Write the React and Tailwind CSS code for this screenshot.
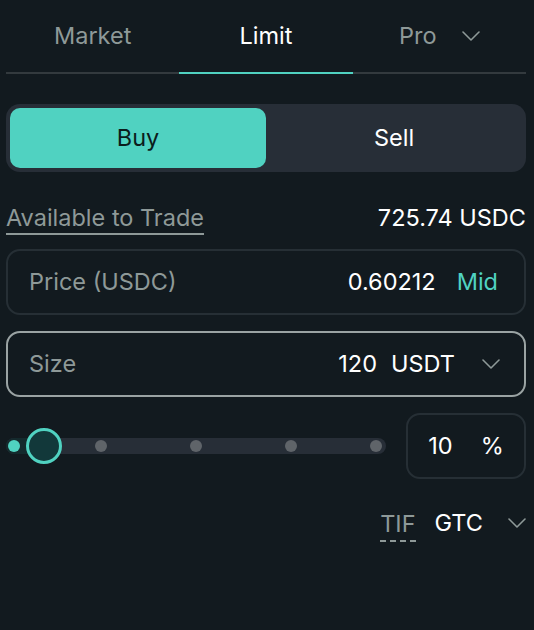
import React from "react";

function Chevron({ className = "" }) {
  return (
    <svg width="18" height="10" viewBox="0 0 18 10" className={className} fill="none">
      <polyline points="1,1 9,9 17,1" stroke="#8e9998" strokeWidth="1.6" strokeLinecap="round" strokeLinejoin="round" />
    </svg>
  );
}

export default function App() {
  const marks = [101, 196, 290.5, 376];
  return (
    <div className="w-[534px] h-[630px] bg-[#121a1f] pl-[6px] pr-[8px] font-['Inter',sans-serif] text-[23.5px] overflow-hidden">
      {/* Tabs */}
      <div className="flex h-[74px]">
        <div className="flex-1 flex items-center justify-center border-b-2 border-[#333a3e] text-[#8e9998]">Market</div>
        <div className="flex-1 flex items-center justify-center border-b-2 border-[#50d2c1] text-white">Limit</div>
        <div className="flex-1 flex items-center justify-center gap-[25px] border-b-2 border-[#333a3e] text-[#8e9998]">
          <span>Pro</span>
          <Chevron />
        </div>
      </div>

      {/* Buy / Sell */}
      <div className="mt-[30px] h-[68px] rounded-[14px] bg-[#272e37] p-[4px] flex">
        <div className="flex-1 rounded-[10px] bg-[#50d2c1] text-[#0b1d1c] flex items-center justify-center">Buy</div>
        <div className="flex-1 text-white flex items-center justify-center">Sell</div>
      </div>

      {/* Available */}
      <div className="mt-[32px] h-[28px] flex items-center justify-between leading-[28px]">
        <span className="text-[#8e9998] underline decoration-2 underline-offset-[7px] decoration-[#8e9998]">Available to Trade</span>
        <span className="text-white">725.74 USDC</span>
      </div>

      {/* Price */}
      <div className="mt-[17px] h-[66px] rounded-[14px] border-2 border-[#262f35] flex items-center pl-[21px] pr-[26px]">
        <span className="text-[#8e9998]">Price (USDC)</span>
        <span className="ml-auto text-white">0.60212</span>
        <span className="ml-[21px] text-[#50d2c1]">Mid</span>
      </div>

      {/* Size */}
      <div className="mt-[16px] h-[66px] rounded-[14px] border-2 border-[#9aa3a3] flex items-center pl-[21px] pr-[24px]">
        <span className="text-[#8e9998]">Size</span>
        <span className="ml-auto text-white">120</span>
        <span className="ml-[14px] text-white">USDT</span>
        <Chevron className="ml-[27px]" />
      </div>

      {/* Slider */}
      <div className="mt-[16px] h-[66px] flex items-center gap-[20px]">
        <div className="relative flex-1 h-[16px] rounded-full bg-[#272e37]">
          <div className="absolute left-0 top-0 h-[16px] w-[44px] rounded-full bg-[#142a2d]" />
          <div className="absolute top-[2px] left-[2px] w-[12px] h-[12px] rounded-full bg-[#50d2c1]" />
          {marks.map((m) => (
            <div
              key={m}
              className="absolute top-[2px] w-[12px] h-[12px] rounded-full bg-[#5f6469]"
              style={{ left: m - 6 - 6 }}
            />
          ))}
          <div className="absolute top-[-10px] left-[20px] w-[36px] h-[36px] rounded-full border-[3px] border-[#50d2c1] bg-[#12383a]" />
        </div>
        <div className="w-[120px] h-[66px] rounded-[14px] border-2 border-[#262f35] flex items-center justify-center gap-[28px] text-white">
          <span>10</span>
          <span>%</span>
        </div>
      </div>

      {/* TIF */}
      <div className="mt-[30px] h-[28px] flex items-center justify-end">
        <span className="text-[#8e9998] inline-block leading-[28px] pb-[2px] border-b-2 border-dashed border-[#8e9998] translate-y-[3px]">TIF</span>
        <span className="ml-[19px] text-white">GTC</span>
        <Chevron className="ml-[25px]" />
      </div>
    </div>
  );
}
